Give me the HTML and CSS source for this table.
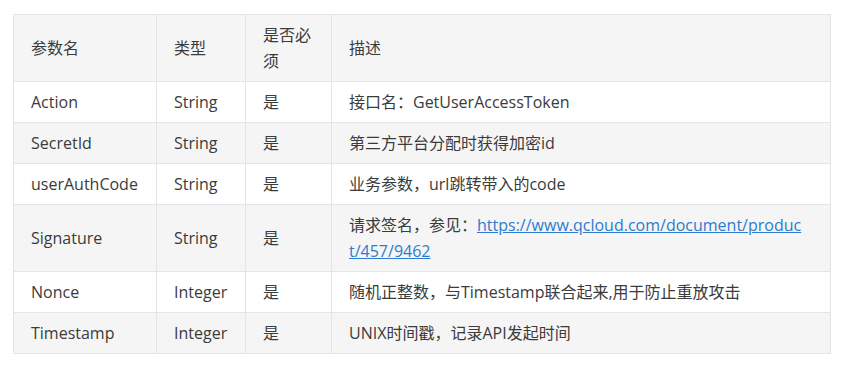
FILE: index.html
```html
<!DOCTYPE html>
<html lang="zh">
<head>
<meta charset="utf-8">
<link rel="stylesheet" href="styles.css">
</head>
<body>
<div class="wrap">
<table class="params">
<colgroup>
<col class="c1"><col class="c2"><col class="c3"><col class="c4">
</colgroup>
<thead>
<tr><th>参数名</th><th>类型</th><th>是否必须</th><th class="desc">描述</th></tr>
</thead>
<tbody>
<tr><td>Action</td><td>String</td><td>是</td><td class="desc">接口名：GetUserAccessToken</td></tr>
<tr><td>SecretId</td><td>String</td><td>是</td><td class="desc">第三方平台分配时获得加密id</td></tr>
<tr><td>userAuthCode</td><td>String</td><td>是</td><td class="desc">业务参数，url跳转带入的code</td></tr>
<tr><td>Signature</td><td>String</td><td>是</td><td class="desc">请求签名，参见：<a class="link" href="#">https://www.qcloud.com/document/product/457/9462</a></td></tr>
<tr><td>Nonce</td><td>Integer</td><td>是</td><td class="desc">随机正整数，与Timestamp联合起来,用于防止重放攻击</td></tr>
<tr><td>Timestamp</td><td>Integer</td><td>是</td><td class="desc">UNIX时间戳，记录API发起时间</td></tr>
</tbody>
</table>
</div>
</body>
</html>
```
FILE: styles.css
```css
html, body {
  margin: 0;
  padding: 0;
  background: #fff;
}
.wrap {
  padding: 14px 0 0 13px;
}
.params {
  border-collapse: collapse;
  table-layout: fixed;
  width: 817px;
  font-family: "Open Sans", "Noto Sans CJK SC", sans-serif;
  font-size: 16px;
  line-height: 26px;
  color: #3b3b3b;
}
.c1 { width: 143px; }
.c2 { width: 89px; }
.c3 { width: 86px; }
.c4 { width: 499px; }
.params th, .params td {
  border: 1px solid #e2e5e9;
  padding: 7px 17px;
  text-align: left;
  font-weight: normal;
  vertical-align: middle;
  word-break: break-all;
}
.params .desc { padding-right: 24px; }
.params thead tr { background: #f5f5f5; }
.params tbody tr:nth-child(even) { background: #f5f5f5; }
.params tbody tr:nth-child(odd) { background: #fff; }
.link {
  color: #2e7bcf;
  text-decoration: underline;
}
```
